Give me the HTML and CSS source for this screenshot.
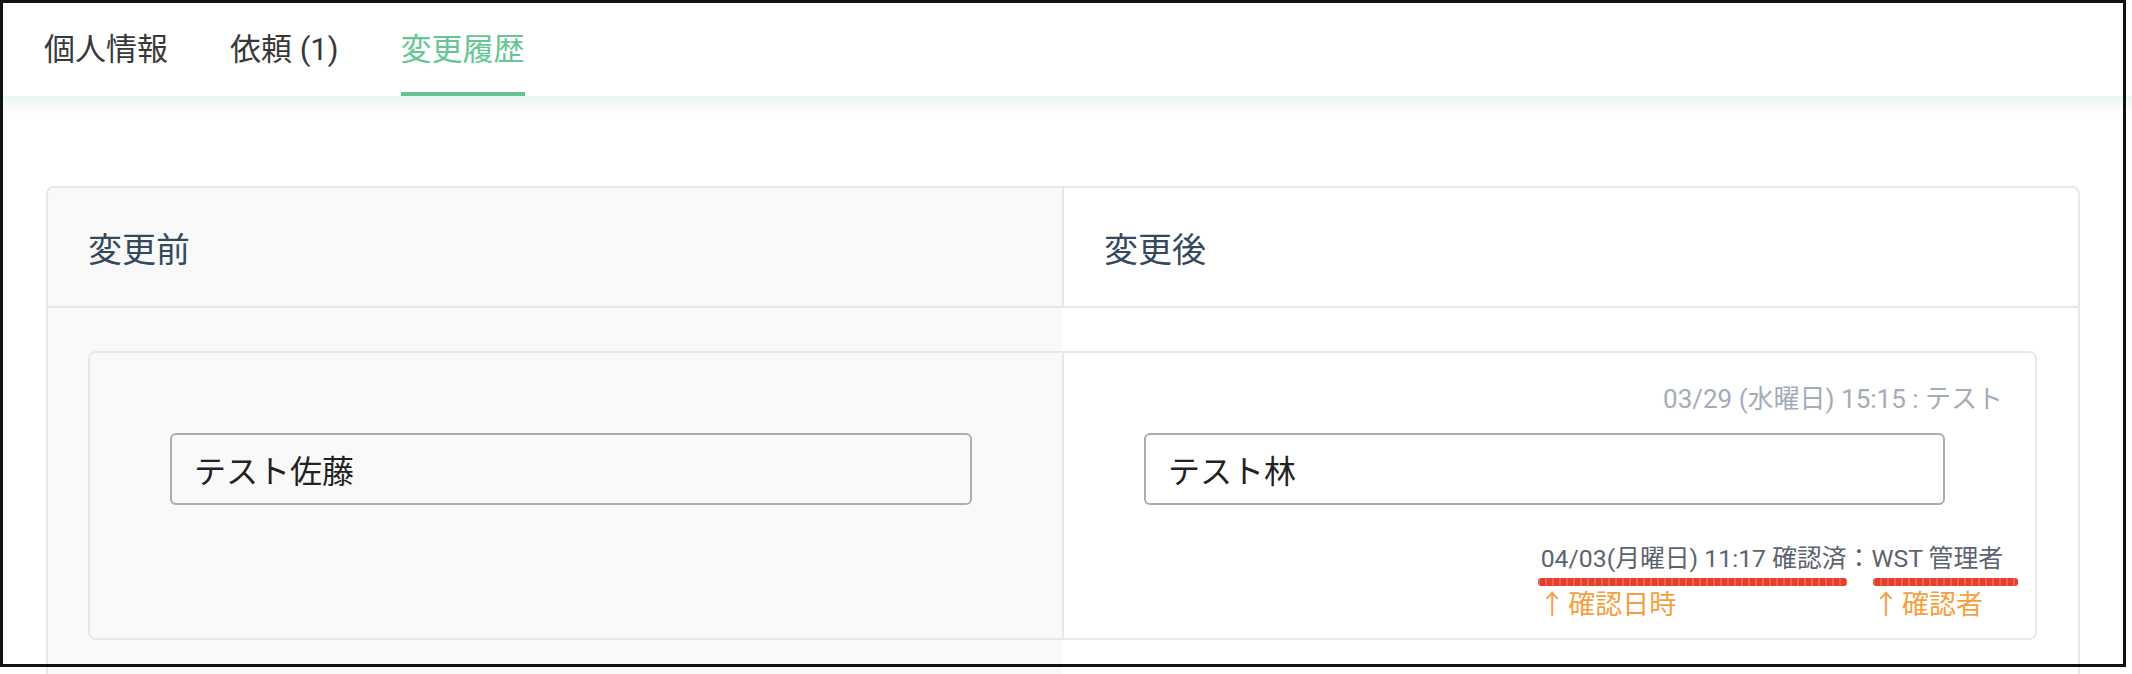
FILE: index.html
```html
<!DOCTYPE html>
<html lang="ja">
<head>
<meta charset="utf-8">
<title>変更履歴</title>
<link rel="stylesheet" href="styles.css">
</head>
<body>
<div class="page">
  <nav class="tabs">
    <div class="tab">個人情報</div>
    <div class="tab">依頼 (1)</div>
    <div class="tab active">変更履歴</div>
  </nav>
  <div class="tabs-shadow"></div>
  <main class="content">
    <section class="history-card">
      <div class="history-head">
        <div class="head-cell before">変更前</div>
        <div class="head-cell after">変更後</div>
      </div>
      <div class="history-body">
        <div class="entry">
          <div class="entry-col before">
            <div class="meta"></div>
            <div class="field"><input class="input" type="text" value="テスト佐藤" readonly></div>
          </div>
          <div class="entry-col after">
            <div class="meta">03/29 (水曜日) 15:15 : テスト</div>
            <div class="field"><input class="input" type="text" value="テスト林" readonly></div>
            <div class="confirm"><span class="mark mark-date">04/03(月曜日) 11:17 確認済<span class="note">↑ 確認日時</span></span>：<span class="mark mark-user">WST 管理者<span class="note">↑ 確認者</span></span></div>
          </div>
        </div>
      </div>
    </section>
  </main>
  <div class="frame"></div>
</div>
</body>
</html>
```

FILE: styles.css
```css
* { box-sizing: border-box; }
html, body { margin: 0; padding: 0; background: #fff; }
body {
  font-family: Roboto, "Noto Sans CJK JP", sans-serif;
  color: #333;
  width: 2132px;
  height: 674px;
  overflow: hidden;
}
.page { position: relative; }

.tabs {
  display: flex;
  gap: 62px;
  padding-left: 44px;
  height: 96px;
  background: #fff;
}
.tab {
  height: 96px;
  display: flex;
  align-items: center;
  font-size: 31px;
  color: #383838;
  border-bottom: 4px solid transparent;
}
.tab.active {
  color: #66c693;
  border-bottom-color: #62c48f;
}
.tabs-shadow {
  height: 18px;
  background: linear-gradient(#eaf6ef, rgba(255, 255, 255, 0));
}

.content { padding: 72px 52px 0 46px; }

.history-card {
  width: 2034px;
  border: 2px solid #e7e7e7;
  border-radius: 8px;
  overflow: hidden;
}
.history-head {
  display: grid;
  grid-template-columns: 1014px 1fr;
  height: 120px;
  border-bottom: 2px solid #e7e7e7;
}
.head-cell {
  display: flex;
  align-items: center;
  padding-left: 40px;
  font-size: 34px;
  color: #34495e;
}
.head-cell.before { background: #f9f9f9; }
.head-cell.after { background: #fff; border-left: 2px solid #e7e7e7; }

.history-body {
  padding: 43px 41px 60px 40px;
  background: linear-gradient(to right, #f9f9f9 1014px, #fff 1014px);
}
.entry {
  display: flex;
  border: 2px solid #e8e8e8;
  border-radius: 8px;
  overflow: hidden;
}
.entry-col { padding: 27px 32px 61px 80px; }
.entry-col.before {
  width: 974px;
  background: #f9f9f9;
  border-right: 2px solid #e8e8e8;
}
.entry-col.after { flex: 1; background: #fff; }

.meta {
  height: 38px;
  display: flex;
  justify-content: flex-end;
  align-items: center;
  font-size: 26px;
  line-height: 38px;
  color: #a3acb8;
}
.field { margin-top: 15px; padding-right: 58px; }
.input {
  display: block;
  width: 100%;
  height: 72px;
  border: 2px solid #acacac;
  border-radius: 6px;
  background: transparent;
  padding: 0 22px;
  font-family: Roboto, "Noto Sans CJK JP", sans-serif;
  font-size: 32px;
  color: #222;
  outline: none;
}

.confirm {
  margin-top: 36px;
  text-align: right;
  font-size: 24.8px;
  line-height: 36px;
  color: #5d636e;
}
.mark { position: relative; display: inline-block; }
.mark::after {
  content: "";
  position: absolute;
  top: 37px;
  height: 8px;
  border-radius: 3px;
  background:
    repeating-linear-gradient(90deg, rgba(255, 255, 255, 0.18) 0 2px, transparent 2px 7px),
    #e6402c;
}
.mark-date::after { left: -3px; right: 0; }
.mark-user::after { left: 2px; right: -15px; }
.note {
  position: absolute;
  top: 49px;
  left: -2px;
  font-size: 27px;
  line-height: 30px;
  word-spacing: -4px;
  color: #f5a03f;
  white-space: nowrap;
}
.mark-user .note { left: 1px; }

.frame {
  position: absolute;
  left: 0;
  top: 0;
  width: 2126px;
  height: 667px;
  border: 3px solid #111;
  pointer-events: none;
}
```
